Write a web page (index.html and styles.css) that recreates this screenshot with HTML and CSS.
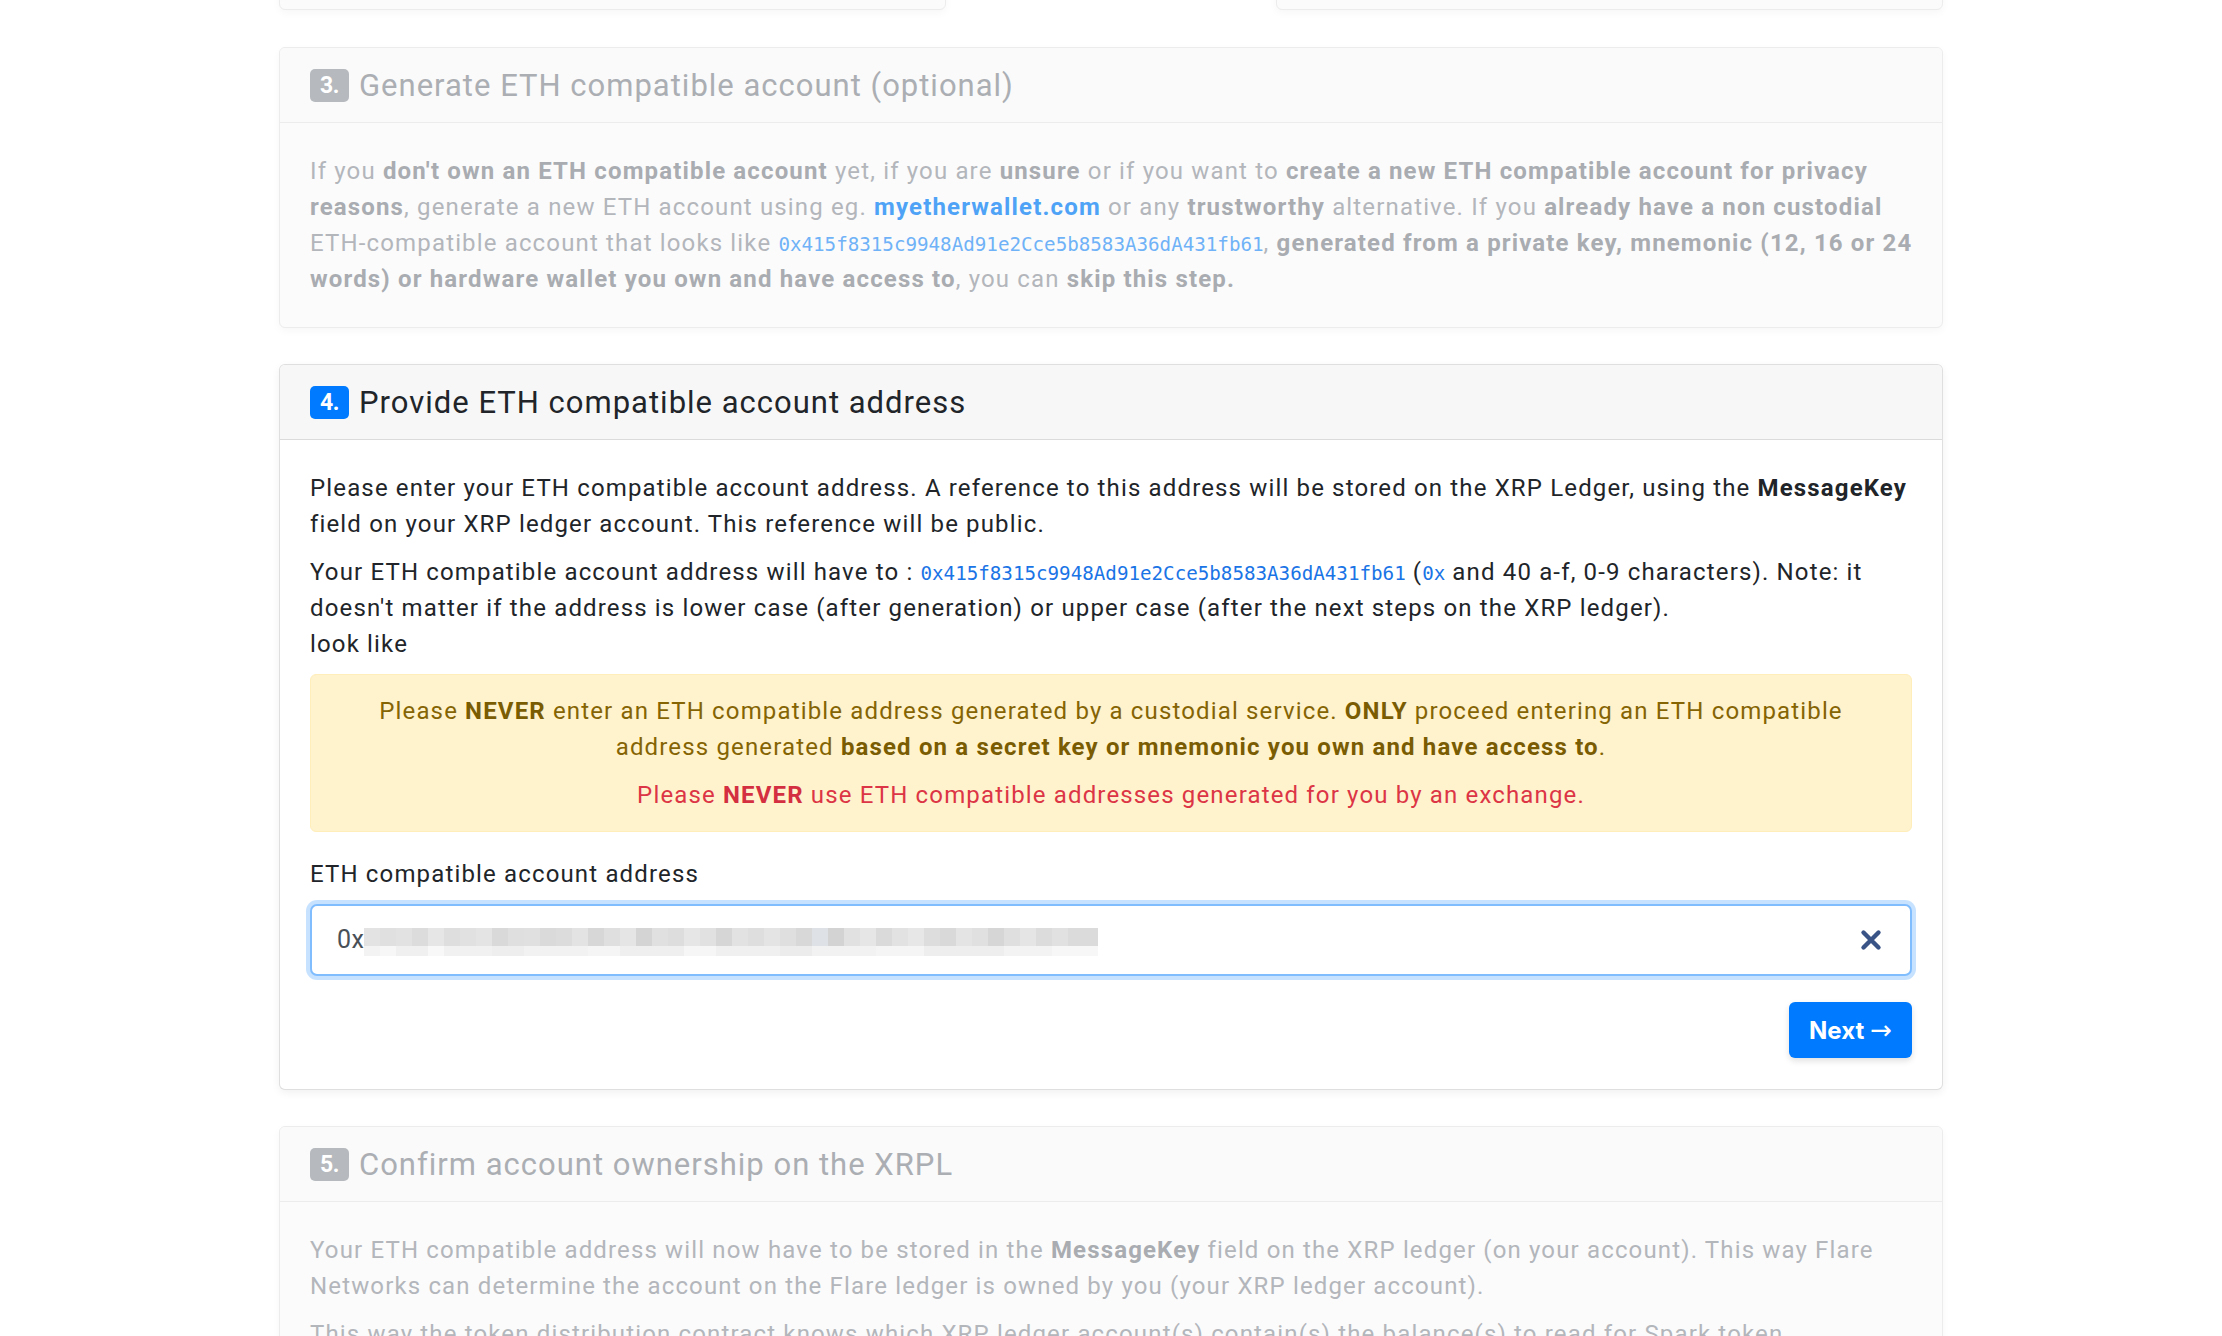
FILE: index.html
```html
<!DOCTYPE html>
<html lang="en">
<head>
<meta charset="utf-8">
<title>Flare - Provide ETH compatible account</title>
<link rel="stylesheet" href="styles.css">
</head>
<body>
<main class="page">
  <div class="prev-row">
    <div class="card card-muted stub"></div>
    <div class="card card-muted stub"></div>
  </div>

  <section class="card card-muted">
    <header class="card-header">
      <span class="badge">3.</span>
      <h5 class="card-title">Generate ETH compatible account (optional)</h5>
    </header>
    <div class="card-body">
      <p>If you <b>don't own an ETH compatible account</b> yet, if you are <b>unsure</b> or if you want to <b>create a new ETH compatible account for privacy</b><br><b>reasons</b>, generate a new ETH account using eg. <a href="#" class="link">myetherwallet.com</a> or any <b>trustworthy</b> alternative. If you <b>already have a non custodial</b><br>ETH-compatible account that looks like <code>0x415f8315c9948Ad91e2Cce5b8583A36dA431fb61</code>, <b>generated from a private key, mnemonic (12, 16 or 24</b><br><b>words) or hardware wallet you own and have access to</b>, you can <b>skip this step.</b></p>
    </div>
  </section>

  <section class="card card-active">
    <header class="card-header">
      <span class="badge">4.</span>
      <h5 class="card-title">Provide ETH compatible account address</h5>
    </header>
    <div class="card-body">
      <p>Please enter your ETH compatible account address. A reference to this address will be stored on the XRP Ledger, using the <b>MessageKey</b><br>field on your XRP ledger account. This reference will be public.</p>
      <p>Your ETH compatible account address will have to : <code>0x415f8315c9948Ad91e2Cce5b8583A36dA431fb61</code> (<code>0x</code> and 40 a-f, 0-9 characters). Note: it<br>doesn't matter if the address is lower case (after generation) or upper case (after the next steps on the XRP ledger).<br>look like</p>
      <div class="alert">
        <p>Please <b>NEVER</b> enter an ETH compatible address generated by a custodial service. <b>ONLY</b> proceed entering an ETH compatible<br>address generated <b>based on a secret key or mnemonic you own and have access to</b>.</p>
        <p class="danger">Please <b>NEVER</b> use ETH compatible addresses generated for you by an exchange.</p>
      </div>
      <label class="field-label" for="eth">ETH compatible account address</label>
      <div class="input-wrap">
        <div class="input" id="eth"><span class="input-text">0x</span><span class="redact"></span></div>
        <button class="clear" type="button" aria-label="Clear">
          <svg width="22" height="22" viewBox="0 0 22 22"><path d="M3.5 3.5 L18.5 18.5 M18.5 3.5 L3.5 18.5" stroke="#3b5488" stroke-width="4.4" stroke-linecap="round" fill="none"/></svg>
        </button>
      </div>
      <div class="actions">
        <button class="btn-next" type="button">Next <span class="arrow">&rarr;</span></button>
      </div>
    </div>
  </section>

  <section class="card card-muted">
    <header class="card-header">
      <span class="badge">5.</span>
      <h5 class="card-title">Confirm account ownership on the XRPL</h5>
    </header>
    <div class="card-body">
      <p>Your ETH compatible address will now have to be stored in the <b>MessageKey</b> field on the XRP ledger (on your account). This way Flare<br>Networks can determine the account on the Flare ledger is owned by you (your XRP ledger account).</p>
      <p>This way the token distribution contract knows which XRP ledger account(s) contain(s) the balance(s) to read for Spark token<br>distribution.</p>
    </div>
  </section>
</main>
</body>
</html>
```

FILE: styles.css
```css
* { box-sizing: border-box; }

html, body {
  margin: 0;
  padding: 0;
  background: #ffffff;
  overflow: hidden;
}

body {
  font-family: "Roboto", "Liberation Sans", sans-serif;
  font-size: 24px;
  line-height: 36px;
  letter-spacing: 1.15px;
  color: #212529;
}

.page {
  width: 1664px;
  margin: 0 auto;
}

.prev-row {
  display: flex;
  justify-content: space-between;
  margin-top: -60px;
  margin-bottom: 37px;
}

.stub {
  width: 667px;
  height: 70px;
  margin-bottom: 0 !important;
}

.card {
  background: #ffffff;
  border: 1px solid rgba(0, 0, 0, 0.125);
  border-radius: 6px;
  box-shadow: 0 3px 8px rgba(0, 0, 0, 0.06);
  margin-bottom: 36px;
  overflow: hidden;
}

.card-header {
  display: flex;
  align-items: center;
  gap: 10px;
  padding: 19px 30px 18px;
  background: #f7f7f7;
  border-bottom: 1px solid rgba(0, 0, 0, 0.11);
}

.card-title {
  margin: 0;
  font-size: 31px;
  line-height: 37px;
  font-weight: 400;
  letter-spacing: 1px;
  color: #212529;
}

.badge {
  display: inline-block;
  min-width: 39px;
  height: 33px;
  padding: 0 6px;
  border-radius: 5px;
  background: #007bff;
  color: #ffffff;
  font-weight: 700;
  font-size: 23px;
  line-height: 33px;
  text-align: center;
  letter-spacing: -0.5px;
}

.card-body {
  padding: 30px 30px 30px;
}

.card-active .card-body {
  padding-bottom: 31px;
}

.card-body p {
  margin: 0 0 12px;
  white-space: nowrap;
}

.card-body p:last-child {
  margin-bottom: 0;
}

b { font-weight: 700; }

code {
  font-family: "DejaVu Sans Mono", "Liberation Mono", monospace;
  font-size: 19.2px;
  line-height: 1;
  letter-spacing: 0;
  color: #1a74e6;
}

.link {
  color: #007bff;
  font-weight: 700;
  text-decoration: none;
}

/* muted (inactive) steps */
.card-muted {
  background: #fbfbfb;
  border-color: #ececec;
  color: #b3b6bb;
  box-shadow: 0 3px 8px rgba(0, 0, 0, 0.035);
}

.card-muted .card-header {
  background: #fafafa;
  border-bottom-color: #ececec;
}

.card-muted .card-title { color: #abaeb3; }
.card-muted .badge { background: #b6b9be; }
.card-muted b { color: #a9acb1; }
.card-muted code { color: #6fb2f7; }
.card-muted .link { color: #4fa3f7; }

/* alert */
.alert {
  background: #fff3cd;
  border: 1px solid #ffeeba;
  border-radius: 6px;
  color: #856404;
  text-align: center;
  padding: 18px 30px;
  margin-bottom: 24px;
}

.alert b { color: #7a5c03; }

.alert .danger { color: #dc3545; }
.alert .danger b { color: #d32f40; }

.field-label {
  display: block;
  margin-bottom: 12px;
}

.input-wrap {
  position: relative;
  margin-bottom: 26px;
}

.input {
  display: flex;
  align-items: center;
  height: 72px;
  padding: 0 24px 0 25px;
  border: 2px solid #80bdff;
  border-radius: 7px;
  box-shadow: 0 0 0 4px rgba(0, 123, 255, 0.22);
  background: #fff;
  color: #495057;
  font-size: 25px;
  letter-spacing: 0.5px;
}

.input-text {
  line-height: 36px;
}

.redact {
  width: 734px;
  height: 28px;
  margin-top: 4px;
  background:
    linear-gradient(to right,
      #e3e3e3 0 16px, #e0e0e0 16px 32px, #e2e2e2 32px 48px, #dcdcdc 48px 64px, #e6e6e6 64px 80px,
      #dedede 80px 96px, #e1e1e1 96px 112px, #e4e4e4 112px 128px, #d9d9d9 128px 144px, #dfdfdf 144px 160px,
      #e0e0e0 160px 176px, #dadada 176px 192px, #dcdcdc 192px 208px, #e3e3e3 208px 224px, #d7d7d7 224px 240px,
      #dfdfdf 240px 256px, #e5e5e5 256px 272px, #d4d4d4 272px 288px, #e0e0e0 288px 304px, #dddddd 304px 320px,
      #e6e6e6 320px 336px, #e1e1e1 336px 352px, #d6d6d6 352px 368px, #e2e2e2 368px 384px, #dedede 384px 400px,
      #e4e4e4 400px 416px, #dfdfdf 416px 432px, #d8d8d8 432px 448px, #dee2e6 448px 464px, #d3d3d3 464px 480px,
      #e1e1e1 480px 496px, #e6e6e6 496px 512px, #dadada 512px 528px, #e2e2e2 528px 544px, #e7e7e7 544px 560px,
      #dddddd 560px 576px, #d9d9d9 576px 592px, #e4e4e4 592px 608px, #e0e0e0 608px 624px, #d6d6d6 624px 640px,
      #dfdfdf 640px 656px, #e5e5e5 656px 672px, #dcdcdc 672px 688px, #e1e1e1 688px 704px, #dbdbdb 704px 734px)
      top left / 100% 18px no-repeat,
    linear-gradient(to right,
      #f3f3f3 0 16px, #f7f7f7 16px 32px, #f0f0f0 32px 64px, #f8f8f8 64px 80px, #f1f1f1 80px 128px,
      #eeeeee 128px 160px, #f2f2f2 160px 224px, #f5f5f5 224px 256px, #efefef 256px 320px, #f6f6f6 320px 352px,
      #f0f0f0 352px 416px, #ececec 416px 448px, #f2f2f2 448px 512px, #f5f5f5 512px 560px, #eeeeee 560px 640px,
      #f3f3f3 640px 688px, #f7f7f7 688px 734px)
      bottom left / 100% 10px no-repeat;
}

.clear {
  position: absolute;
  right: 30px;
  top: 50%;
  transform: translateY(-50%);
  width: 22px;
  height: 22px;
  padding: 0;
  border: 0;
  background: transparent;
  display: flex;
}

.actions {
  display: flex;
  justify-content: flex-end;
}

.btn-next {
  display: inline-flex;
  align-items: center;
  gap: 6px;
  height: 56px;
  padding: 0 20px;
  border: 0;
  border-radius: 6px;
  background: #007bff;
  color: #ffffff;
  font-family: "Inter", "Roboto", sans-serif;
  font-weight: 700;
  font-size: 24px;
  letter-spacing: 0;
  box-shadow: 0 3px 6px rgba(0, 0, 0, 0.12);
}

.btn-next .arrow {
  font-family: "DejaVu Sans", sans-serif;
  font-weight: 400;
  font-size: 26px;
}
```
